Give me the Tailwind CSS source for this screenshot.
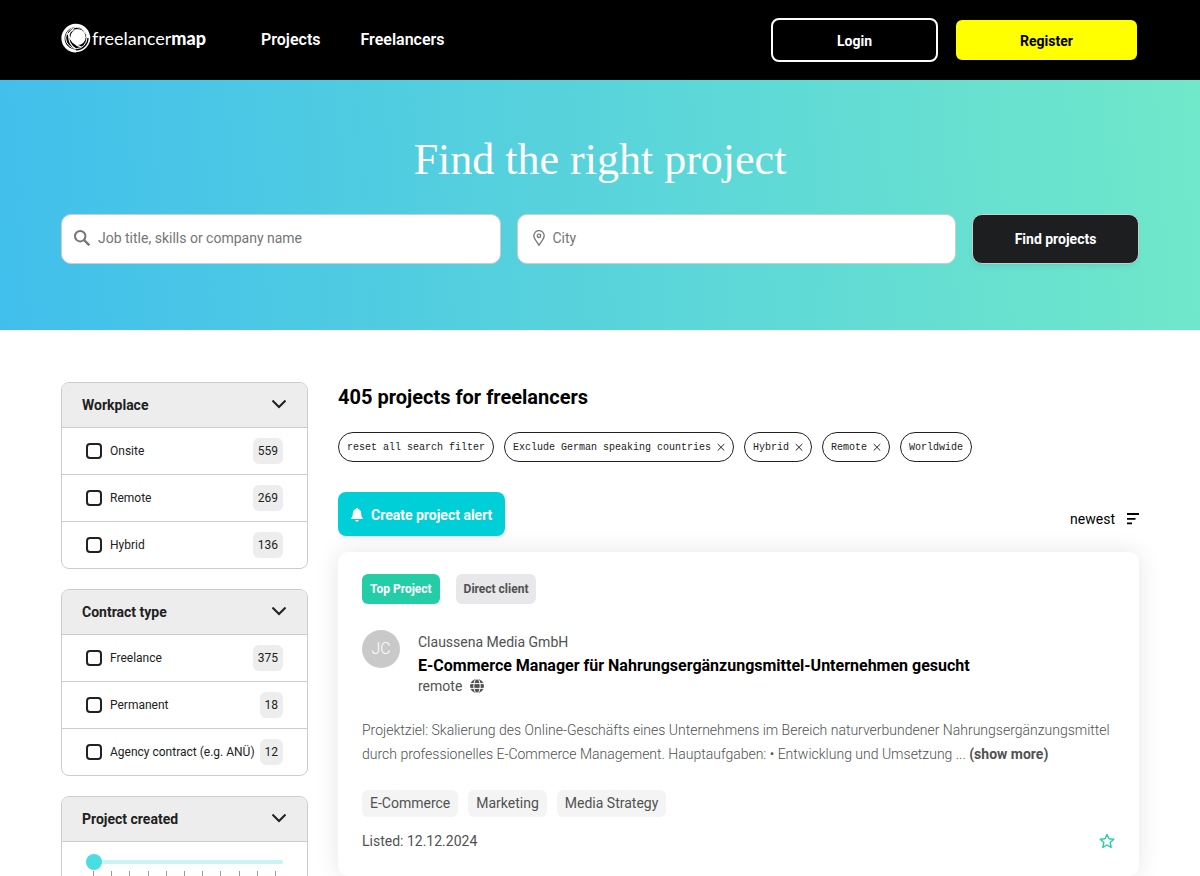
<!DOCTYPE html>
<html lang="en">
<head>
    <meta charset="UTF-8">
    <meta name="viewport" content="width=device-width, initial-scale=1.0">
    <title>Find projects - freelancermap</title>
    <script src="https://cdn.jsdelivr.net/npm/@tailwindcss/browser@4"></script>
</head>
<body class="bg-white font-['Roboto',sans-serif] text-[#212121] overflow-x-hidden">
    <!-- Navigation -->
    <header class="bg-black text-white">
        <div class="max-w-[1108px] mx-auto px-[15px] h-20 flex items-center justify-between">
            <div class="flex items-center">
                <a href="/" class="flex items-center w-[145px] gap-px pb-1" aria-label="freelancermap">
                    <svg class="w-[30px] h-[30px] shrink-0" viewBox="0 0 30 30" fill="none" stroke="#fff">
                        <path d="M27.600 15A12.800 12.800 0 1 0 15 28" stroke-width="3.200"/>
                        <path d="M28.300 13A13.500 13.500 0 0 1 14 28.300" stroke-width="1.600"/>
                        <circle cx="15.300" cy="15" r="10.600" stroke-width="1"/>
                        <circle cx="17" cy="14.300" r="7.700" fill="#fff" stroke="none"/>
                        <path d="M13 5.500C6 9 6 20 14 25.300" stroke-width="1.200"/>
                        <path d="M6.500 9.500C8.500 16 13.500 22 20.500 24.200" stroke-width="1.200"/>
                        <path d="M6.500 11.500C11 6 19 4.500 24.500 10.500" stroke-width="1"/>
                    </svg>
                    <span class="font-['Lato',sans-serif] font-normal text-lg leading-5">freelancer<b class="font-black">map</b></span>
                </a>
                <nav class="flex gap-10 ml-[55px] font-semibold text-base leading-5">
                    <a href="/projects">Projects</a>
                    <a href="/freelancers">Freelancers</a>
                </nav>
            </div>
            <div class="flex gap-4 text-sm font-bold">
                <button type="button" class="w-[167px] h-11 pt-0.5 border-2 border-white rounded-lg">Login</button>
                <button type="button" class="w-[185px] h-11 pt-0.5 border-2 border-black rounded-lg bg-[#ffff00] text-black">Register</button>
            </div>
        </div>
    </header>

    <!-- Search -->
    <section class="bg-[linear-gradient(86deg,#41bfec,#70e8ca)]">
        <div class="max-w-[1108px] mx-auto px-[15px] pt-[50px] pb-[66px]">
            <h1 class="font-['Liberation_Serif',serif] font-light text-[44px] leading-[60px] text-white text-center">Find the right project</h1>
            <form class="grid grid-cols-[1fr_1fr_167px] gap-4 mt-6">
                <label class="min-w-0 h-[50px] bg-white border border-[#ccc] rounded-[10px] flex items-center gap-2 px-3 pb-0.5 text-[#757575]">
                    <svg class="w-4 h-4 shrink-0" viewBox="0 0 16 16" fill="none" stroke="currentColor" stroke-width="2">
                        <circle cx="6.200" cy="6.200" r="5.200"/>
                        <path d="M10 10l5.300 5.300" stroke-width="2.400"/>
                    </svg>
                    <input type="text" name="query" aria-label="Job title, skills or company name" placeholder="Job title, skills or company name" class="w-full text-sm outline-none placeholder:text-[#757575]">
                </label>
                <label class="min-w-0 h-[50px] bg-white border border-[#ccc] rounded-[10px] flex items-center gap-2 pl-[15px] pr-3 pb-0.5 text-[#757575]">
                    <svg class="w-3 h-4 shrink-0" viewBox="0 0 12 16" fill="none" stroke="currentColor" stroke-width="1.300">
                        <path d="M6 15.200C4.500 12.500 .8 8.800 .8 5.800a5.200 5.200 0 0 1 10.400 0C11.200 8.800 7.500 12.500 6 15.200z"/>
                        <circle cx="6" cy="5.800" r="1.700"/>
                    </svg>
                    <input type="text" name="city" aria-label="City" placeholder="City" class="w-full text-sm outline-none placeholder:text-[#757575]">
                </label>
                <button type="submit" class="h-[50px] bg-[#1d1e20] border border-[#ccc] rounded-[10px] shadow-md shadow-black/5 text-white text-sm font-bold">Find projects</button>
            </form>
        </div>
    </section>

    <div class="max-w-[1108px] mx-auto px-[15px] pt-[52px] flex gap-[30px] items-start">
        <!-- Filters -->
        <aside class="w-[247px] shrink-0 flex flex-col gap-5 text-xs">
            <section class="border border-[#ccc] rounded-lg overflow-hidden divide-y divide-[#ccc]">
                <button type="button" class="w-full h-[45px] bg-[#ededed] pl-5 pr-[21px] flex items-center justify-between text-sm font-bold">
                    Workplace
                    <svg class="w-[14px] h-[10px]" viewBox="0 0 14 10" fill="none" stroke="currentColor" stroke-width="2"><path d="M.5.5L7 7l6.500-6.500"/></svg>
                </button>
                <label class="h-[47px] px-6 flex items-center">
                    <input type="checkbox" class="appearance-none w-4 h-4 border-2 border-[#212121] rounded-[4px] mr-2">
                    Onsite
                    <span class="ml-auto h-[26px] px-[5px] rounded-md bg-[#ededed] flex items-center">559</span>
                </label>
                <label class="h-[47px] px-6 flex items-center">
                    <input type="checkbox" class="appearance-none w-4 h-4 border-2 border-[#212121] rounded-[4px] mr-2">
                    Remote
                    <span class="ml-auto h-[26px] px-[5px] rounded-md bg-[#ededed] flex items-center">269</span>
                </label>
                <label class="h-[46px] px-6 flex items-center">
                    <input type="checkbox" class="appearance-none w-4 h-4 border-2 border-[#212121] rounded-[4px] mr-2">
                    Hybrid
                    <span class="ml-auto h-[26px] px-[5px] rounded-md bg-[#ededed] flex items-center">136</span>
                </label>
            </section>

            <section class="border border-[#ccc] rounded-lg overflow-hidden divide-y divide-[#ccc]">
                <button type="button" class="w-full h-[45px] bg-[#ededed] pl-5 pr-[21px] flex items-center justify-between text-sm font-bold">
                    Contract type
                    <svg class="w-[14px] h-[10px]" viewBox="0 0 14 10" fill="none" stroke="currentColor" stroke-width="2"><path d="M.5.5L7 7l6.500-6.500"/></svg>
                </button>
                <label class="h-[47px] px-6 flex items-center">
                    <input type="checkbox" class="appearance-none w-4 h-4 border-2 border-[#212121] rounded-[4px] mr-2">
                    Freelance
                    <span class="ml-auto h-[26px] px-[5px] rounded-md bg-[#ededed] flex items-center">375</span>
                </label>
                <label class="h-[47px] px-6 flex items-center">
                    <input type="checkbox" class="appearance-none w-4 h-4 border-2 border-[#212121] rounded-[4px] mr-2">
                    Permanent
                    <span class="ml-auto h-[26px] px-[5px] rounded-md bg-[#ededed] flex items-center">18</span>
                </label>
                <label class="h-[46px] px-6 flex items-center whitespace-nowrap">
                    <input type="checkbox" class="appearance-none w-4 h-4 border-2 border-[#212121] rounded-[4px] mr-2">
                    Agency contract (e.g. ANÜ)
                    <span class="ml-auto h-[26px] px-[5px] rounded-md bg-[#ededed] flex items-center">12</span>
                </label>
            </section>

            <section class="border border-[#ccc] rounded-lg overflow-hidden divide-y divide-[#ccc]">
                <button type="button" class="w-full h-[45px] bg-[#ededed] pl-5 pr-[21px] flex items-center justify-between text-sm font-bold">
                    Project created
                    <svg class="w-[14px] h-[10px]" viewBox="0 0 14 10" fill="none" stroke="currentColor" stroke-width="2"><path d="M.5.5L7 7l6.500-6.500"/></svg>
                </button>
                <div class="px-6 pt-3 pb-4">
                    <input type="range" min="0" max="10" value="0" aria-label="Project created" class="block appearance-none w-full h-4 bg-transparent [&::-webkit-slider-runnable-track]:h-1 [&::-webkit-slider-runnable-track]:rounded-full [&::-webkit-slider-runnable-track]:bg-[#c8f4f5] [&::-webkit-slider-thumb]:appearance-none [&::-webkit-slider-thumb]:w-4 [&::-webkit-slider-thumb]:h-4 [&::-webkit-slider-thumb]:-mt-1.5 [&::-webkit-slider-thumb]:rounded-full [&::-webkit-slider-thumb]:bg-[#4adde1]">
                    <div class="flex justify-between px-[7px] mt-px">
                        <i class="w-px h-2 bg-[#999]"></i>
                        <i class="w-px h-2 bg-[#999]"></i>
                        <i class="w-px h-2 bg-[#999]"></i>
                        <i class="w-px h-2 bg-[#999]"></i>
                        <i class="w-px h-2 bg-[#999]"></i>
                        <i class="w-px h-2 bg-[#999]"></i>
                        <i class="w-px h-2 bg-[#999]"></i>
                        <i class="w-px h-2 bg-[#999]"></i>
                        <i class="w-px h-2 bg-[#999]"></i>
                        <i class="w-px h-2 bg-[#999]"></i>
                        <i class="w-px h-2 bg-[#999]"></i>
                    </div>
                </div>
            </section>
        </aside>

        <!-- Results -->
        <main class="flex-1 min-w-0">
            <h2 class="text-xl leading-[30px] font-bold text-black">405 projects for freelancers</h2>

            <div class="flex flex-wrap gap-[10px] mt-5 font-['Liberation_Mono',monospace] text-[10px]">
                <button type="button" class="h-[30px] px-2 border border-[#212121] rounded-full">reset all search filter</button>
                <button type="button" class="h-[30px] px-2 border border-[#212121] rounded-full flex items-center gap-1.5">Exclude German speaking countries
                    <svg class="w-2 h-2" viewBox="0 0 8 8" stroke="currentColor"><path d="M.7 1l6.600 6.600M7.300 1L.7 7.600"/></svg>
                </button>
                <button type="button" class="h-[30px] px-2 border border-[#212121] rounded-full flex items-center gap-1.5">Hybrid
                    <svg class="w-2 h-2" viewBox="0 0 8 8" stroke="currentColor"><path d="M.7 1l6.600 6.600M7.300 1L.7 7.600"/></svg>
                </button>
                <button type="button" class="h-[30px] px-2 border border-[#212121] rounded-full flex items-center gap-1.5">Remote
                    <svg class="w-2 h-2" viewBox="0 0 8 8" stroke="currentColor"><path d="M.7 1l6.600 6.600M7.300 1L.7 7.600"/></svg>
                </button>
                <button type="button" class="h-[30px] px-2 border border-[#212121] rounded-full">Worldwide</button>
            </div>

            <div class="flex justify-between items-end mt-[30px]">
                <button type="button" class="h-11 px-[13px] pt-0.5 rounded-lg bg-[#00cfd8] shadow-md shadow-black/5 text-white text-sm font-bold flex items-center gap-2">
                    <svg class="w-3 h-[14px]" viewBox="0 0 12 14" fill="currentColor">
                        <path d="M6 0c.6 0 1 .4 1 1 2 .5 3.200 2 3.200 4.200 0 2.800.6 4 1.800 4.900V11H0v-.9c1.200-.9 1.800-2.100 1.800-4.900C1.800 3 3 1.500 5 1c0-.6.4-1 1-1zM4.300 12h3.400c0 .9-.7 1.600-1.700 1.600S4.300 12.900 4.300 12z"/>
                    </svg>
                    Create project alert
                </button>
                <button type="button" class="flex items-center gap-3 text-sm text-black mb-[7px]">
                    newest
                    <svg class="w-3 h-3" viewBox="0 0 12 12" fill="currentColor"><path d="M0 0h12v2H0zM0 5h8.500v1.800H0zM0 9.500h5v1.800H0z"/></svg>
                </button>
            </div>

            <article class="mt-4 px-6 pt-[22px] pb-[25px] rounded-[10px] bg-white shadow-[0_0_24px_rgba(0,0,0,0.1)] text-sm text-[#515151]">
                <div class="flex gap-4 text-xs font-bold">
                    <span class="h-[30px] px-2 rounded-md bg-[#23cea7] text-white flex items-center">Top Project</span>
                    <span class="h-[30px] px-2 rounded-md bg-[#e8e8ea] flex items-center">Direct client</span>
                </div>

                <div class="flex gap-[18px] mt-[26px]">
                    <div class="w-[38px] h-[38px] shrink-0 rounded-full bg-[#c9c9c9] text-white text-base font-light flex items-center justify-center">JC</div>
                    <div>
                        <p class="leading-6">Claussena Media GmbH</p>
                        <h3 class="text-base leading-6 font-bold text-black"><a href="/project">E-Commerce Manager für Nahrungsergänzungsmittel-Unternehmen gesucht</a></h3>
                        <p class="leading-4 flex items-center gap-2">
                            remote
                            <svg class="w-[14px] h-[14px]" viewBox="0 0 14 14" fill="none">
                                <circle cx="7" cy="7" r="7" fill="#515151"/>
                                <path d="M0 4.600h14M0 9.400h14" stroke="#fff"/>
                                <ellipse cx="7" cy="7" rx="3.200" ry="7.200" stroke="#fff"/>
                            </svg>
                        </p>
                    </div>
                </div>

                <p class="mt-6 leading-6 font-light">Projektziel: Skalierung des Online-Geschäfts eines Unternehmens im Bereich naturverbundener Nahrungsergänzungsmittel durch professionelles E-Commerce Management. Hauptaufgaben: • Entwicklung und Umsetzung ... <a href="/project" class="inline-block font-bold">(show more)</a></p>

                <div class="flex gap-[10px] mt-6">
                    <span class="h-[27px] px-2 pb-0.5 rounded-md bg-[#f4f4f4] flex items-center">E-Commerce</span>
                    <span class="h-[27px] px-2 pb-0.5 rounded-md bg-[#f4f4f4] flex items-center">Marketing</span>
                    <span class="h-[27px] px-2 pb-0.5 rounded-md bg-[#f4f4f4] flex items-center">Media Strategy</span>
                </div>

                <div class="flex items-center justify-between mt-[14px] leading-5">
                    <span>Listed: 12.12.2024</span>
                    <button type="button" aria-label="Save project" class="text-[#23cea7]">
                        <svg class="w-4 h-4" viewBox="0 0 16 16" fill="none" stroke="currentColor" stroke-width="1.400" stroke-linejoin="round">
                            <path d="M8 1.500l2 4.300 4.800.5-3.600 3.200 1 4.900L8 12l-4.200 2.400 1-4.900L1.200 6.300 6 5.800z"/>
                        </svg>
                    </button>
                </div>
            </article>
        </main>
    </div>
</body>
</html>
